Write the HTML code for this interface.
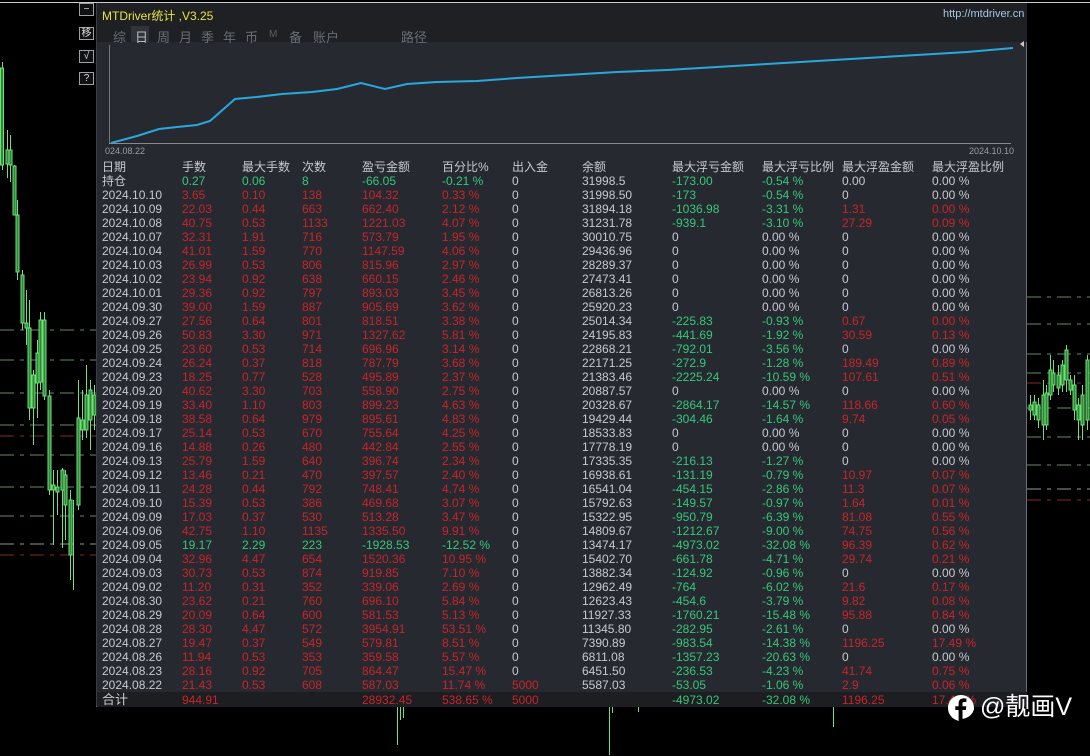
<!DOCTYPE html>
<html><head><meta charset="utf-8"><style>
*{margin:0;padding:0;box-sizing:border-box}
body{width:1090px;height:756px;background:#000;position:relative;overflow:hidden;font-family:"Liberation Sans","Noto Sans CJK SC",sans-serif;font-size:12px}
.btn{position:absolute;left:79px;width:15px;height:13px;border:1px solid #9aa0a6;color:#ddd;font-size:10px;line-height:11px;text-align:center;background:#111}
#panel{position:absolute;left:96px;top:3px;width:931px;height:704px;background:#262a30;border-right:1px solid #6a6e74;border-bottom:1px solid #9a9ea4;border-left:1px solid #3a3e44}
#hdr{position:absolute;left:0;top:0;width:930px;height:39px;background:#1e2023}
.t{position:absolute;white-space:nowrap}
.r{position:absolute;left:0;width:930px;height:14px;line-height:14px}
.r span{position:absolute;top:0;white-space:nowrap}
.r span:nth-child(1){left:5px}.r span:nth-child(2){left:85px}.r span:nth-child(3){left:145px}.r span:nth-child(4){left:205px}
.r span:nth-child(5){left:265px}.r span:nth-child(6){left:345px}.r span:nth-child(7){left:415px}.r span:nth-child(8){left:485px}
.r span:nth-child(9){left:575px}.r span:nth-child(10){left:665px}.r span:nth-child(11){left:745px}.r span:nth-child(12){left:835px}
.w{color:#c6cacf}.d{color:#c8242a}.g{color:#36c77a}
</style></head><body>
<svg style="position:absolute;left:0;top:0" width="1090" height="756">
<line x1="0" y1="2.5" x2="1090" y2="2.5" stroke="#ccc" stroke-width="1"/>
<g stroke-dasharray="14,6,4,6" stroke-width="1">
<line x1="0" y1="330" x2="96" y2="330" stroke="#6a8a6a"/><line x1="0" y1="360" x2="96" y2="360" stroke="#6a8a6a"/>
<line x1="0" y1="393" x2="96" y2="393" stroke="#6a8a6a"/><line x1="0" y1="425" x2="96" y2="425" stroke="#6a8a6a"/>
<line x1="0" y1="436" x2="96" y2="436" stroke="#8a2a2a"/><line x1="0" y1="455" x2="96" y2="455" stroke="#6a8a6a"/>
<line x1="0" y1="487" x2="96" y2="487" stroke="#6a8a6a"/><line x1="0" y1="516" x2="96" y2="516" stroke="#6a8a6a"/>
<line x1="0" y1="544" x2="96" y2="544" stroke="#8a9a8a"/><line x1="0" y1="555" x2="96" y2="555" stroke="#8a2a2a"/>
<line x1="1027" y1="297" x2="1090" y2="297" stroke="#6a8a6a"/><line x1="1027" y1="324" x2="1090" y2="324" stroke="#6a8a6a"/>
<line x1="1027" y1="354" x2="1090" y2="354" stroke="#6a8a6a"/><line x1="1027" y1="373" x2="1090" y2="373" stroke="#6a8a6a"/>
<line x1="1027" y1="383" x2="1090" y2="383" stroke="#8a2a2a"/><line x1="1027" y1="408" x2="1090" y2="408" stroke="#6a8a6a"/>
<line x1="1027" y1="437" x2="1090" y2="437" stroke="#6a8a6a"/><line x1="1027" y1="465" x2="1090" y2="465" stroke="#6a8a6a"/>
<line x1="1027" y1="489" x2="1090" y2="489" stroke="#9a9a9a"/><line x1="1027" y1="500" x2="1090" y2="500" stroke="#8a2a2a"/>
</g>
<g stroke="#6fe07a" fill="#2f8a35" stroke-width="1">
<line x1="2.5" y1="62" x2="2.5" y2="170"/><rect x="0.5" y="68" width="3" height="97"/>
<line x1="7.5" y1="130" x2="7.5" y2="178"/><rect x="6" y="150" width="3" height="14"/>
<line x1="10.5" y1="135" x2="10.5" y2="182"/><rect x="9" y="150" width="3" height="15"/>
<line x1="14.5" y1="165" x2="14.5" y2="215"/><rect x="13" y="166" width="3" height="49"/>
<line x1="17.5" y1="200" x2="17.5" y2="280"/><rect x="16" y="215" width="3" height="57"/>
<line x1="22.5" y1="270" x2="22.5" y2="330"/><rect x="21" y="275" width="3" height="48"/>
<line x1="26.5" y1="290" x2="26.5" y2="345"/><rect x="25" y="323" width="3" height="5"/>
<line x1="29.5" y1="300" x2="29.5" y2="420"/><rect x="28" y="328" width="3" height="80"/>
<line x1="33.5" y1="370" x2="33.5" y2="445"/><rect x="32" y="375" width="3" height="33"/>
<line x1="37.5" y1="340" x2="37.5" y2="418"/><rect x="36" y="353" width="3" height="30"/>
<line x1="40.5" y1="312" x2="40.5" y2="390"/><rect x="39" y="320" width="3" height="62"/>
<line x1="44.5" y1="312" x2="44.5" y2="400"/><rect x="43" y="320" width="3" height="76"/>
<line x1="49.5" y1="390" x2="49.5" y2="495"/><rect x="48" y="396" width="3" height="94"/>
<line x1="53.5" y1="470" x2="53.5" y2="545"/><rect x="52" y="485" width="3" height="5"/>
<line x1="57.5" y1="470" x2="57.5" y2="515"/><rect x="56" y="487" width="3" height="5"/>
<line x1="62.5" y1="468" x2="62.5" y2="548"/><rect x="61" y="470" width="3" height="20"/>
<line x1="65.5" y1="470" x2="65.5" y2="540"/><rect x="64" y="475" width="3" height="30"/>
<line x1="70.5" y1="490" x2="70.5" y2="580"/><rect x="69" y="500" width="3" height="55"/>
<line x1="73.5" y1="500" x2="73.5" y2="590"/>
<line x1="78.5" y1="380" x2="78.5" y2="510"/><rect x="77" y="418" width="3" height="87"/>
<line x1="82.5" y1="390" x2="82.5" y2="440"/><rect x="81" y="420" width="3" height="10"/>
<line x1="86.5" y1="365" x2="86.5" y2="438"/><rect x="85" y="395" width="3" height="35"/>
<line x1="90.5" y1="380" x2="90.5" y2="450"/><rect x="89" y="390" width="3" height="30"/>
<line x1="94.5" y1="385" x2="94.5" y2="430"/><rect x="93" y="395" width="3" height="20"/>
<line x1="1030.5" y1="395" x2="1030.5" y2="420"/><rect x="1029" y="405" width="3" height="5"/>
<line x1="1034.5" y1="395" x2="1034.5" y2="420"/><rect x="1033" y="402" width="3" height="13"/>
<line x1="1038.5" y1="398" x2="1038.5" y2="428"/><rect x="1037" y="405" width="3" height="15"/>
<line x1="1043.5" y1="380" x2="1043.5" y2="440"/><rect x="1042" y="395" width="3" height="30"/>
<line x1="1046.5" y1="385" x2="1046.5" y2="430"/><rect x="1045" y="393" width="3" height="32"/>
<line x1="1050.5" y1="355" x2="1050.5" y2="400"/><rect x="1049" y="370" width="3" height="25"/>
<line x1="1053.5" y1="360" x2="1053.5" y2="392"/><rect x="1052" y="373" width="3" height="12"/>
<line x1="1058.5" y1="365" x2="1058.5" y2="395"/><rect x="1057" y="375" width="3" height="13"/>
<line x1="1062.5" y1="360" x2="1062.5" y2="392"/><rect x="1061" y="365" width="3" height="20"/>
<line x1="1066.5" y1="345" x2="1066.5" y2="392"/><rect x="1065" y="350" width="3" height="30"/>
<line x1="1070.5" y1="375" x2="1070.5" y2="395"/><rect x="1069" y="380" width="3" height="10"/>
<line x1="1074.5" y1="375" x2="1074.5" y2="420"/><rect x="1073" y="385" width="3" height="25"/>
<line x1="1078.5" y1="398" x2="1078.5" y2="440"/><rect x="1077" y="405" width="3" height="15"/>
<line x1="1082.5" y1="385" x2="1082.5" y2="440"/><rect x="1081" y="395" width="3" height="30"/>
<line x1="1087.5" y1="355" x2="1087.5" y2="430"/><rect x="1086" y="360" width="3" height="60"/>
<line x1="397.5" y1="706" x2="397.5" y2="745"/><line x1="400.5" y1="706" x2="400.5" y2="720"/><line x1="403.5" y1="706" x2="403.5" y2="718"/>
<line x1="609.5" y1="706" x2="609.5" y2="755"/><line x1="612.5" y1="706" x2="612.5" y2="713"/>
<line x1="638.5" y1="706" x2="638.5" y2="712"/><line x1="833.5" y1="706" x2="833.5" y2="727"/>
</g>
</svg>
<div class="btn" style="top:3px">−</div>
<div class="btn" style="top:27px">移</div>
<div class="btn" style="top:50px">√</div>
<div class="btn" style="top:72px">?</div>
<div id="panel">
<div id="hdr"></div>
<div class="t" style="left:5px;top:4px;color:#e8e04a;font-size:12px">MTDriver统计 ,V3.25</div>
<div class="t" style="left:846px;top:5px;color:#a8c8e8;font-size:11px">http://mtdriver.cn</div>
<div class="t" style="left:16px;top:24px;color:#6a6e74;font-size:13px;word-spacing:0">综</div>
<div class="t" style="left:34px;top:23px;width:18px;height:16px;background:#30343a"></div>
<div class="t" style="left:38px;top:24px;color:#b8bcc2;font-size:13px">日</div>
<div class="t" style="left:60px;top:24px;color:#6a6e74;font-size:13px">周</div>
<div class="t" style="left:82px;top:24px;color:#6a6e74;font-size:13px">月</div>
<div class="t" style="left:104px;top:24px;color:#6a6e74;font-size:13px">季</div>
<div class="t" style="left:126px;top:24px;color:#6a6e74;font-size:13px">年</div>
<div class="t" style="left:148px;top:24px;color:#6a6e74;font-size:13px">币</div>
<div class="t" style="left:172px;top:26px;color:#5a5e64;font-size:10px">M</div>
<div class="t" style="left:192px;top:24px;color:#6a6e74;font-size:13px">备</div>
<div class="t" style="left:216px;top:24px;color:#6a6e74;font-size:13px">账户</div>
<div class="t" style="left:304px;top:24px;color:#6a6e74;font-size:13px">路径</div>
<svg style="position:absolute;left:0;top:0" width="931" height="160">
<line x1="12.5" y1="42" x2="12.5" y2="141" stroke="#777" />
<line x1="12" y1="140.5" x2="914" y2="140.5" stroke="#888"/>
<polyline fill="none" stroke="#29a8e0" stroke-width="2" points="14,140 40,133 62,126 80,124 100,122 113,118 138,96 160,94 185,91 215,89 240,86 264,80 288,86 310,81 340,79 380,78 420,75 470,72 520,69 570,67 620,64 670,61 720,58 770,55 820,52 870,49 916,45"/>
<polygon points="923,41 927,38 927,44" fill="#ccc"/>
</svg>
<div class="t" style="left:8px;top:143px;color:#9a9ea4;font-size:9px">024.08.22</div>
<div class="t" style="left:872px;top:143px;color:#9a9ea4;font-size:9px">2024.10.10</div>
<div style="position:absolute;left:0;top:157px">
<div class="r w" style="top:0;font-size:12px"><span>日期</span><span>手数</span><span>最大手数</span><span>次数</span><span>盈亏金额</span><span>百分比%</span><span>出入金</span><span>余额</span><span>最大浮亏金额</span><span>最大浮亏比例</span><span>最大浮盈金额</span><span>最大浮盈比例</span></div>
<div class="r" style="top:14px"><span class="w">持仓</span><span class="g">0.27</span><span class="g">0.06</span><span class="g">8</span><span class="g">-66.05</span><span class="g">-0.21 %</span><span class="w">0</span><span class="w">31998.5</span><span class="g">-173.00</span><span class="g">-0.54 %</span><span class="w">0.00</span><span class="w">0.00 %</span></div>
</div>
<div style="position:absolute;left:0;top:185px">
<div class="r" style="top:0"><span class="w">2024.10.10</span><span class="d">3.65</span><span class="d">0.10</span><span class="d">138</span><span class="d">104.32</span><span class="d">0.33 %</span><span class="w">0</span><span class="w">31998.50</span><span class="g">-173</span><span class="g">-0.54 %</span><span class="w">0</span><span class="w">0.00 %</span></div>
<div class="r" style="top:14px"><span class="w">2024.10.09</span><span class="d">22.03</span><span class="d">0.44</span><span class="d">663</span><span class="d">662.40</span><span class="d">2.12 %</span><span class="w">0</span><span class="w">31894.18</span><span class="g">-1036.98</span><span class="g">-3.31 %</span><span class="d">1.31</span><span class="d">0.00 %</span></div>
<div class="r" style="top:28px"><span class="w">2024.10.08</span><span class="d">40.75</span><span class="d">0.53</span><span class="d">1133</span><span class="d">1221.03</span><span class="d">4.07 %</span><span class="w">0</span><span class="w">31231.78</span><span class="g">-939.1</span><span class="g">-3.10 %</span><span class="d">27.29</span><span class="d">0.09 %</span></div>
<div class="r" style="top:42px"><span class="w">2024.10.07</span><span class="d">32.31</span><span class="d">1.91</span><span class="d">716</span><span class="d">573.79</span><span class="d">1.95 %</span><span class="w">0</span><span class="w">30010.75</span><span class="w">0</span><span class="w">0.00 %</span><span class="w">0</span><span class="w">0.00 %</span></div>
<div class="r" style="top:56px"><span class="w">2024.10.04</span><span class="d">41.01</span><span class="d">1.59</span><span class="d">770</span><span class="d">1147.59</span><span class="d">4.06 %</span><span class="w">0</span><span class="w">29436.96</span><span class="w">0</span><span class="w">0.00 %</span><span class="w">0</span><span class="w">0.00 %</span></div>
<div class="r" style="top:70px"><span class="w">2024.10.03</span><span class="d">26.99</span><span class="d">0.53</span><span class="d">806</span><span class="d">815.96</span><span class="d">2.97 %</span><span class="w">0</span><span class="w">28289.37</span><span class="w">0</span><span class="w">0.00 %</span><span class="w">0</span><span class="w">0.00 %</span></div>
<div class="r" style="top:84px"><span class="w">2024.10.02</span><span class="d">23.94</span><span class="d">0.92</span><span class="d">638</span><span class="d">660.15</span><span class="d">2.46 %</span><span class="w">0</span><span class="w">27473.41</span><span class="w">0</span><span class="w">0.00 %</span><span class="w">0</span><span class="w">0.00 %</span></div>
<div class="r" style="top:98px"><span class="w">2024.10.01</span><span class="d">29.36</span><span class="d">0.92</span><span class="d">797</span><span class="d">893.03</span><span class="d">3.45 %</span><span class="w">0</span><span class="w">26813.26</span><span class="w">0</span><span class="w">0.00 %</span><span class="w">0</span><span class="w">0.00 %</span></div>
<div class="r" style="top:112px"><span class="w">2024.09.30</span><span class="d">39.00</span><span class="d">1.59</span><span class="d">887</span><span class="d">905.69</span><span class="d">3.62 %</span><span class="w">0</span><span class="w">25920.23</span><span class="w">0</span><span class="w">0.00 %</span><span class="w">0</span><span class="w">0.00 %</span></div>
<div class="r" style="top:126px"><span class="w">2024.09.27</span><span class="d">27.56</span><span class="d">0.64</span><span class="d">801</span><span class="d">818.51</span><span class="d">3.38 %</span><span class="w">0</span><span class="w">25014.34</span><span class="g">-225.83</span><span class="g">-0.93 %</span><span class="d">0.67</span><span class="d">0.00 %</span></div>
<div class="r" style="top:140px"><span class="w">2024.09.26</span><span class="d">50.83</span><span class="d">3.30</span><span class="d">971</span><span class="d">1327.62</span><span class="d">5.81 %</span><span class="w">0</span><span class="w">24195.83</span><span class="g">-441.69</span><span class="g">-1.92 %</span><span class="d">30.59</span><span class="d">0.13 %</span></div>
<div class="r" style="top:154px"><span class="w">2024.09.25</span><span class="d">23.60</span><span class="d">0.53</span><span class="d">714</span><span class="d">696.96</span><span class="d">3.14 %</span><span class="w">0</span><span class="w">22868.21</span><span class="g">-792.01</span><span class="g">-3.56 %</span><span class="w">0</span><span class="w">0.00 %</span></div>
<div class="r" style="top:168px"><span class="w">2024.09.24</span><span class="d">26.24</span><span class="d">0.37</span><span class="d">818</span><span class="d">787.79</span><span class="d">3.68 %</span><span class="w">0</span><span class="w">22171.25</span><span class="g">-272.9</span><span class="g">-1.28 %</span><span class="d">189.49</span><span class="d">0.89 %</span></div>
<div class="r" style="top:182px"><span class="w">2024.09.23</span><span class="d">18.25</span><span class="d">0.77</span><span class="d">528</span><span class="d">495.89</span><span class="d">2.37 %</span><span class="w">0</span><span class="w">21383.46</span><span class="g">-2225.24</span><span class="g">-10.59 %</span><span class="d">107.61</span><span class="d">0.51 %</span></div>
<div class="r" style="top:196px"><span class="w">2024.09.20</span><span class="d">40.62</span><span class="d">3.30</span><span class="d">703</span><span class="d">558.90</span><span class="d">2.75 %</span><span class="w">0</span><span class="w">20887.57</span><span class="w">0</span><span class="w">0.00 %</span><span class="w">0</span><span class="w">0.00 %</span></div>
<div class="r" style="top:210px"><span class="w">2024.09.19</span><span class="d">33.40</span><span class="d">1.10</span><span class="d">803</span><span class="d">899.23</span><span class="d">4.63 %</span><span class="w">0</span><span class="w">20328.67</span><span class="g">-2864.17</span><span class="g">-14.57 %</span><span class="d">118.66</span><span class="d">0.60 %</span></div>
<div class="r" style="top:224px"><span class="w">2024.09.18</span><span class="d">38.58</span><span class="d">0.64</span><span class="d">979</span><span class="d">895.61</span><span class="d">4.83 %</span><span class="w">0</span><span class="w">19429.44</span><span class="g">-304.46</span><span class="g">-1.64 %</span><span class="d">9.74</span><span class="d">0.05 %</span></div>
<div class="r" style="top:238px"><span class="w">2024.09.17</span><span class="d">25.14</span><span class="d">0.53</span><span class="d">670</span><span class="d">755.64</span><span class="d">4.25 %</span><span class="w">0</span><span class="w">18533.83</span><span class="w">0</span><span class="w">0.00 %</span><span class="w">0</span><span class="w">0.00 %</span></div>
<div class="r" style="top:252px"><span class="w">2024.09.16</span><span class="d">14.88</span><span class="d">0.26</span><span class="d">480</span><span class="d">442.84</span><span class="d">2.55 %</span><span class="w">0</span><span class="w">17778.19</span><span class="w">0</span><span class="w">0.00 %</span><span class="w">0</span><span class="w">0.00 %</span></div>
<div class="r" style="top:266px"><span class="w">2024.09.13</span><span class="d">25.79</span><span class="d">1.59</span><span class="d">640</span><span class="d">396.74</span><span class="d">2.34 %</span><span class="w">0</span><span class="w">17335.35</span><span class="g">-216.13</span><span class="g">-1.27 %</span><span class="w">0</span><span class="w">0.00 %</span></div>
<div class="r" style="top:280px"><span class="w">2024.09.12</span><span class="d">13.46</span><span class="d">0.21</span><span class="d">470</span><span class="d">397.57</span><span class="d">2.40 %</span><span class="w">0</span><span class="w">16938.61</span><span class="g">-131.19</span><span class="g">-0.79 %</span><span class="d">10.97</span><span class="d">0.07 %</span></div>
<div class="r" style="top:294px"><span class="w">2024.09.11</span><span class="d">24.28</span><span class="d">0.44</span><span class="d">792</span><span class="d">748.41</span><span class="d">4.74 %</span><span class="w">0</span><span class="w">16541.04</span><span class="g">-454.15</span><span class="g">-2.86 %</span><span class="d">11.3</span><span class="d">0.07 %</span></div>
<div class="r" style="top:308px"><span class="w">2024.09.10</span><span class="d">15.39</span><span class="d">0.53</span><span class="d">386</span><span class="d">469.68</span><span class="d">3.07 %</span><span class="w">0</span><span class="w">15792.63</span><span class="g">-149.57</span><span class="g">-0.97 %</span><span class="d">1.64</span><span class="d">0.01 %</span></div>
<div class="r" style="top:322px"><span class="w">2024.09.09</span><span class="d">17.03</span><span class="d">0.37</span><span class="d">530</span><span class="d">513.28</span><span class="d">3.47 %</span><span class="w">0</span><span class="w">15322.95</span><span class="g">-950.79</span><span class="g">-6.39 %</span><span class="d">81.08</span><span class="d">0.55 %</span></div>
<div class="r" style="top:336px"><span class="w">2024.09.06</span><span class="d">42.75</span><span class="d">1.10</span><span class="d">1135</span><span class="d">1335.50</span><span class="d">9.91 %</span><span class="w">0</span><span class="w">14809.67</span><span class="g">-1212.67</span><span class="g">-9.00 %</span><span class="d">74.75</span><span class="d">0.56 %</span></div>
<div class="r" style="top:350px"><span class="w">2024.09.05</span><span class="g">19.17</span><span class="g">2.29</span><span class="g">223</span><span class="g">-1928.53</span><span class="g">-12.52 %</span><span class="w">0</span><span class="w">13474.17</span><span class="g">-4973.02</span><span class="g">-32.08 %</span><span class="d">96.39</span><span class="d">0.62 %</span></div>
<div class="r" style="top:364px"><span class="w">2024.09.04</span><span class="d">32.96</span><span class="d">4.47</span><span class="d">654</span><span class="d">1520.36</span><span class="d">10.95 %</span><span class="w">0</span><span class="w">15402.70</span><span class="g">-661.78</span><span class="g">-4.71 %</span><span class="d">29.74</span><span class="d">0.21 %</span></div>
<div class="r" style="top:378px"><span class="w">2024.09.03</span><span class="d">30.73</span><span class="d">0.53</span><span class="d">874</span><span class="d">919.85</span><span class="d">7.10 %</span><span class="w">0</span><span class="w">13882.34</span><span class="g">-124.92</span><span class="g">-0.96 %</span><span class="w">0</span><span class="w">0.00 %</span></div>
<div class="r" style="top:392px"><span class="w">2024.09.02</span><span class="d">11.20</span><span class="d">0.31</span><span class="d">352</span><span class="d">339.06</span><span class="d">2.69 %</span><span class="w">0</span><span class="w">12962.49</span><span class="g">-764</span><span class="g">-6.02 %</span><span class="d">21.6</span><span class="d">0.17 %</span></div>
<div class="r" style="top:406px"><span class="w">2024.08.30</span><span class="d">23.62</span><span class="d">0.21</span><span class="d">760</span><span class="d">696.10</span><span class="d">5.84 %</span><span class="w">0</span><span class="w">12623.43</span><span class="g">-454.6</span><span class="g">-3.79 %</span><span class="d">9.82</span><span class="d">0.08 %</span></div>
<div class="r" style="top:420px"><span class="w">2024.08.29</span><span class="d">20.09</span><span class="d">0.64</span><span class="d">600</span><span class="d">581.53</span><span class="d">5.13 %</span><span class="w">0</span><span class="w">11927.33</span><span class="g">-1760.21</span><span class="g">-15.48 %</span><span class="d">95.88</span><span class="d">0.84 %</span></div>
<div class="r" style="top:434px"><span class="w">2024.08.28</span><span class="d">28.30</span><span class="d">4.47</span><span class="d">572</span><span class="d">3954.91</span><span class="d">53.51 %</span><span class="w">0</span><span class="w">11345.80</span><span class="g">-282.95</span><span class="g">-2.61 %</span><span class="w">0</span><span class="w">0.00 %</span></div>
<div class="r" style="top:448px"><span class="w">2024.08.27</span><span class="d">19.47</span><span class="d">0.37</span><span class="d">549</span><span class="d">579.81</span><span class="d">8.51 %</span><span class="w">0</span><span class="w">7390.89</span><span class="g">-983.54</span><span class="g">-14.38 %</span><span class="d">1196.25</span><span class="d">17.49 %</span></div>
<div class="r" style="top:462px"><span class="w">2024.08.26</span><span class="d">11.94</span><span class="d">0.53</span><span class="d">353</span><span class="d">359.58</span><span class="d">5.57 %</span><span class="w">0</span><span class="w">6811.08</span><span class="g">-1357.23</span><span class="g">-20.63 %</span><span class="w">0</span><span class="w">0.00 %</span></div>
<div class="r" style="top:476px"><span class="w">2024.08.23</span><span class="d">28.16</span><span class="d">0.92</span><span class="d">705</span><span class="d">864.47</span><span class="d">15.47 %</span><span class="w">0</span><span class="w">6451.50</span><span class="g">-236.53</span><span class="g">-4.23 %</span><span class="d">41.74</span><span class="d">0.75 %</span></div>
<div class="r" style="top:490px"><span class="w">2024.08.22</span><span class="d">21.43</span><span class="d">0.53</span><span class="d">608</span><span class="d">587.03</span><span class="d">11.74 %</span><span class="d">5000</span><span class="w">5587.03</span><span class="g">-53.05</span><span class="g">-1.06 %</span><span class="d">2.9</span><span class="d">0.06 %</span></div>
</div>
<div style="position:absolute;left:0;top:689px;width:930px;height:15px;background:#1c1e21"></div>
<div class="r" style="top:690px"><span class="w" style="font-size:13px">合计</span><span class="d">944.91</span><span></span><span></span><span class="d">28932.45</span><span class="d">538.65 %</span><span class="d">5000</span><span></span><span class="g">-4973.02</span><span class="g">-32.08 %</span><span class="d">1196.25</span><span class="d">17.49 %</span></div>
</div>
<svg style="position:absolute;left:946px;top:693px" width="30" height="30" viewBox="0 0 30 30">
<path d="M15 2C7.8 2 2 7.8 2 15c0 6.1 4.2 11.2 9.9 12.6V28l3-2C22.1 26 28 20.2 28 15 28 7.8 22.2 2 15 2z" fill="#fff"/>
<path d="M16.5 27V17h3.3l.5-3.8h-3.8v-2.4c0-1.1.3-1.8 1.9-1.8h2V5.6c-.4 0-1.6-.2-2.9-.2-2.9 0-4.9 1.8-4.9 5v2.8H9.3V17h3.3v10z" fill="#000"/>
</svg>
<div class="t" style="left:980px;top:692px;color:#fff;font-size:25px;line-height:30px">@靓画V</div>
</body></html>
